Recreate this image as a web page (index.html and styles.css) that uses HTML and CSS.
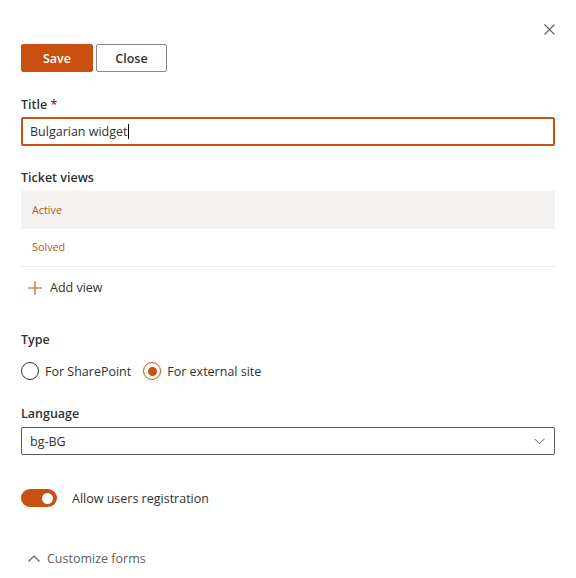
FILE: index.html
```html
<!DOCTYPE html>
<html lang="en">
<head>
<meta charset="utf-8">
<title>Widget settings</title>
<link rel="stylesheet" href="styles.css">
</head>
<body>
<div class="panel">
  <div class="header">
    <button class="close-x" aria-label="Close panel">
      <svg width="11" height="11" viewBox="0 0 11 11"><path d="M0.5 0.5 L10.5 10.5 M10.5 0.5 L0.5 10.5" stroke="#605e5c" stroke-width="1.1" fill="none"/></svg>
    </button>
  </div>
  <div class="commands">
    <button class="btn btn-primary">Save</button>
    <button class="btn btn-default">Close</button>
  </div>

  <div class="field title-field">
    <div class="field-label">Title <span class="req">*</span></div>
    <div class="text-input">Bulgarian widget<span class="caret"></span></div>
  </div>

  <div class="field views">
    <div class="field-label">Ticket views</div>
    <div class="view-list">
      <div class="view-row selected">Active</div>
      <div class="view-row last">Solved</div>
    </div>
    <div class="add-view">
      <svg width="14" height="14" viewBox="0 0 14 14"><path d="M7 0 V14 M0 7 H14" stroke="#ca5010" stroke-width="1.1" fill="none"/></svg>
      <span>Add view</span>
    </div>
  </div>

  <div class="field type">
    <div class="field-label">Type</div>
    <div class="radios">
      <div class="radio"><span class="circle"></span><span>For SharePoint</span></div>
      <div class="radio checked"><span class="circle"><span class="dot"></span></span><span>For external site</span></div>
    </div>
  </div>

  <div class="field language">
    <div class="field-label">Language</div>
    <div class="dropdown">
      <span>bg-BG</span>
      <svg width="11" height="7" viewBox="0 0 11 7"><path d="M0.5 0.8 L5.5 5.8 L10.5 0.8" stroke="#605e5c" stroke-width="1" fill="none"/></svg>
    </div>
  </div>

  <div class="toggle-row">
    <span class="toggle"><span class="knob"></span></span>
    <span class="toggle-label">Allow users registration</span>
  </div>

  <div class="customize">
    <svg width="12" height="7" viewBox="0 0 12 7"><path d="M0.5 6.5 L6 1 L11.5 6.5" stroke="#605e5c" stroke-width="1.1" fill="none"/></svg>
    <span>Customize forms</span>
  </div>
</div>
</body>
</html>
```

FILE: styles.css
```css
body {
  margin: 0;
  background: #ffffff;
  color: #323130;
  font-family: "Open Sans", "Noto Sans", sans-serif;
  font-size: 12.5px;
}

.panel {
  padding: 0 21px;
}

.header {
  height: 44px;
  display: flex;
  justify-content: flex-end;
  align-items: flex-start;
}

.close-x {
  margin-top: 24px;
  padding: 0;
  border: 0;
  background: none;
  width: 11px;
  height: 11px;
  display: flex;
}

.commands {
  display: flex;
  gap: 3px;
  height: 28px;
}

.btn {
  box-sizing: border-box;
  height: 28px;
  border-radius: 2px;
  font-family: inherit;
  font-size: 12.5px;
  font-weight: 600;
  padding: 0;
  cursor: pointer;
}

.btn-primary {
  width: 72px;
  background: #ca5010;
  border: 1px solid #ca5010;
  color: #ffffff;
}

.btn-default {
  width: 71px;
  background: #ffffff;
  border: 1px solid #8a8886;
  color: #323130;
}

.field-label {
  font-weight: 600;
  line-height: 20px;
  height: 20px;
}

.req {
  color: #a4262c;
}

.title-field {
  margin-top: 23px;
}

.text-input {
  margin-top: 2px;
  box-sizing: border-box;
  height: 29px;
  border: 2px solid #ca5010;
  border-radius: 2px;
  padding: 0 7px;
  display: flex;
  align-items: center;
}

.caret {
  display: inline-block;
  width: 1px;
  height: 15px;
  background: #000000;
}

.views {
  margin-top: 22px;
}

.view-list {
  margin-top: 3px;
}

.view-row {
  height: 38px;
  padding: 0 11px;
  display: flex;
  align-items: center;
  color: #ca5010;
  font-size: 10.8px;
  padding-bottom: 2px;
  box-sizing: border-box;
}

.view-row.selected {
  background: #f3f2f1;
}

.view-row.last {
  border-bottom: 1px solid #edebe9;
}

.add-view {
  height: 40px;
  display: flex;
  align-items: center;
  gap: 8px;
  padding-left: 7px;
  padding-top: 1px;
  box-sizing: border-box;
}

.type {
  margin-top: 23px;
}

.radios {
  margin-top: 11px;
  height: 20px;
  display: flex;
  align-items: center;
  gap: 12px;
}

.radio {
  display: flex;
  align-items: center;
  gap: 6px;
}

.circle {
  box-sizing: border-box;
  width: 18px;
  height: 18px;
  border: 1px solid #323130;
  border-radius: 50%;
  display: flex;
  align-items: center;
  justify-content: center;
}

.radio.checked .circle {
  border-color: #ca5010;
}

.dot {
  width: 9px;
  height: 9px;
  border-radius: 50%;
  background: #ca5010;
}

.language {
  margin-top: 23px;
}

.dropdown {
  margin-top: 3px;
  box-sizing: border-box;
  height: 28px;
  border: 1px solid #605e5c;
  border-radius: 2px;
  padding: 0 9px 0 8px;
  display: flex;
  align-items: center;
  justify-content: space-between;
}

.toggle-row {
  margin-top: 33px;
  height: 20px;
  display: flex;
  align-items: center;
  gap: 15px;
}

.toggle {
  box-sizing: border-box;
  width: 36px;
  height: 18px;
  border-radius: 9px;
  background: #ca5010;
  display: flex;
  align-items: center;
  justify-content: flex-end;
  padding-right: 4px;
}

.knob {
  width: 11px;
  height: 11px;
  border-radius: 50%;
  background: #ffffff;
}

.customize {
  margin-top: 40px;
  height: 20px;
  display: flex;
  align-items: center;
  gap: 7px;
  padding-left: 7px;
  color: #605e5c;
}
```
